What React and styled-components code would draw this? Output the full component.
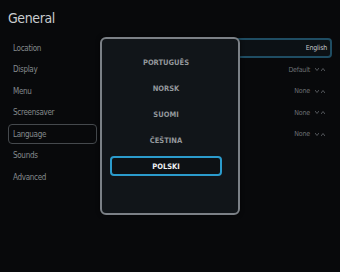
import React from 'react'
import styled, { createGlobalStyle } from 'styled-components'

const GlobalStyle = createGlobalStyle`
  html, body {
    margin: 0;
    padding: 0;
    background: #08090b;
  }
  body {
    font-family: 'DejaVu Sans Condensed', 'DejaVu Sans', sans-serif;
    font-stretch: condensed;
  }
`

const Screen = styled.div`
  position: relative;
  width: 340px;
  height: 272px;
  background: #08090b;
  overflow: hidden;
  padding: 8px 8px 0 8px;
  box-sizing: border-box;
`

const Title = styled.h1`
  margin: 0;
  height: 22px;
  line-height: 20px;
  font-size: 14px;
  font-weight: 400;
  letter-spacing: -0.4px;
  color: #c9cccf;
`

const Settings = styled.div`
  margin-top: 8px;
  display: flex;
  flex-direction: column;
  gap: 1.5px;
`

const Row = styled.div`
  display: grid;
  grid-template-columns: 89px 1fr;
  gap: 5px;
  height: 20px;
`

const Label = styled.div`
  display: flex;
  align-items: center;
  padding-left: 4px;
  font-size: 8px;
  letter-spacing: -0.3px;
  color: #85898d;
  border-radius: 4px;
  border: 1px solid ${p => (p.$active ? '#45494d' : 'transparent')};
  box-sizing: border-box;
`

const Value = styled.div`
  display: flex;
  align-items: center;
  justify-content: flex-end;
  gap: 5px;
  padding-right: ${p => (p.$focused ? '3px' : '5px')};
  font-size: 7px;
  letter-spacing: -0.2px;
  color: ${p => (p.$focused ? '#c4c7ca' : '#6c7074')};
  border-radius: 4px;
  border: 2px solid ${p => (p.$focused ? '#1f4d63' : 'transparent')};
  background: ${p => (p.$focused ? '#0c1115' : 'transparent')};
  box-sizing: border-box;
`

const Arrows = styled.span`
  display: flex;
  gap: 2px;
  svg {
    display: block;
  }
`

const Popup = styled.div`
  position: absolute;
  left: 100px;
  top: 37px;
  width: 140px;
  height: 178px;
  box-sizing: border-box;
  border: 2px solid #7b8086;
  border-radius: 6px;
  background: #111519;
  padding: 13px 16px 0 8px;
  display: flex;
  flex-direction: column;
  gap: 6px;
  box-shadow: 0 0 4px rgba(0, 0, 0, 0.6);
`

const Option = styled.div`
  height: 20px;
  display: flex;
  align-items: center;
  justify-content: center;
  font-size: 7.5px;
  font-weight: 700;
  color: ${p => (p.$selected ? '#eef0f2' : '#94989c')};
  border-radius: 4px;
  border: 2px solid ${p => (p.$selected ? '#2b9bcc' : 'transparent')};
  background: ${p => (p.$selected ? '#0d1114' : 'transparent')};
  box-sizing: border-box;
`

const Chevron = ({ up }) => (
  <svg width="4" height="3" viewBox="0 0 4 3">
    <path d={up ? 'M0 3 L2 0.5 L4 3' : 'M0 0 L2 2.5 L4 0'} fill="none" stroke="#54585c" strokeWidth="1" />
  </svg>
)

const rows = [
  { label: 'Location', value: 'English', focused: true },
  { label: 'Display', value: 'Default', arrows: true },
  { label: 'Menu', value: 'None', arrows: true },
  { label: 'Screensaver', value: 'None', arrows: true },
  { label: 'Language', value: 'None', arrows: true, active: true },
  { label: 'Sounds' },
  { label: 'Advanced' },
]

const languages = ['PORTUGUÊS', 'NORSK', 'SUOMI', 'ČEŠTINA', 'POLSKI']

export default function App() {
  return (
    <>
      <GlobalStyle />
      <Screen>
        <Title>General</Title>
        <Settings>
          {rows.map(r => (
            <Row key={r.label}>
              <Label $active={r.active}>{r.label}</Label>
              {r.value ? (
                <Value $focused={r.focused}>
                  {r.value}
                  {r.arrows && (
                    <Arrows>
                      <Chevron />
                      <Chevron up />
                    </Arrows>
                  )}
                </Value>
              ) : (
                <div />
              )}
            </Row>
          ))}
        </Settings>
        <Popup>
          {languages.map(l => (
            <Option key={l} $selected={l === 'POLSKI'}>
              {l}
            </Option>
          ))}
        </Popup>
      </Screen>
    </>
  )
}
